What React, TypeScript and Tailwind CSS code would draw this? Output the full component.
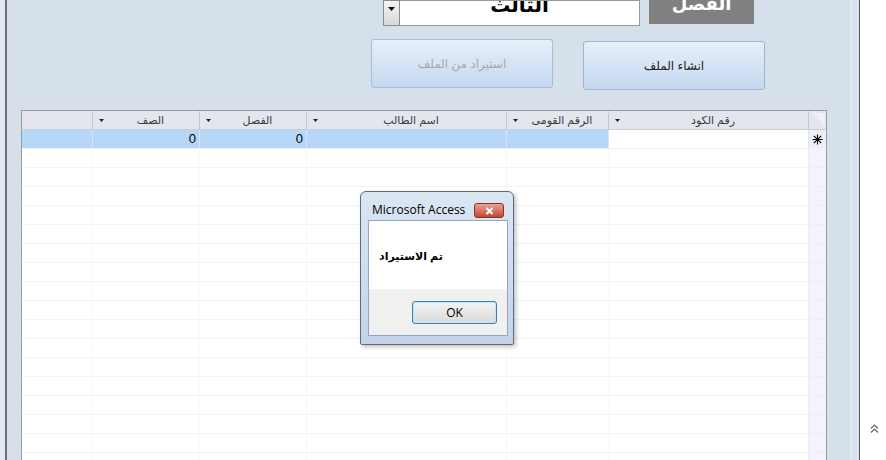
import React from "react";

const FONT = { fontFamily: "'Liberation Sans', 'DejaVu Sans', Arial, sans-serif" };

function Arrow() {
  return (
    <svg width="5" height="3" viewBox="0 0 5 3" className="shrink-0">
      <path d="M0 0 H5 L2.5 3 Z" fill="#222" />
    </svg>
  );
}

export default function App() {
  const rows = Array.from({ length: 17 });
  const headers = ["الصف", "الفصل", "اسم الطالب", "الرقم القومى", "رقم الكود"];
  return (
    <div className="relative w-[886px] h-[460px] overflow-hidden flex bg-white" style={FONT}>
      {/* left frame */}
      <div className="w-[5px] h-full bg-[#dfe9f5]" />
      <div className="w-[2px] h-full bg-[#6e6e6e]" />

      {/* main form */}
      <div className="w-[843px] h-full bg-[#d6e0eb] flex flex-col">
        {/* top row */}
        <div className="flex items-start ml-[376px] h-[26px]">
          <div className="w-[17px] h-[26px] border border-[#8c8c8c] bg-gradient-to-b from-[#f4f4f4] to-[#d8d8d8] flex justify-center pt-[6px]">
            <svg width="7" height="4" viewBox="0 0 7 4">
              <path d="M0 0 H7 L3.5 4 Z" fill="#111" />
            </svg>
          </div>
          <div className="w-[240px] h-[26px] border border-l-0 border-[#9a9a9a] bg-white overflow-hidden flex justify-center">
            <span className="text-[20px] font-bold text-black leading-none -mt-[6px]">الثالث</span>
          </div>
          <div className="ml-[9px] w-[105px] h-[24px] bg-[#808080] overflow-hidden flex justify-center">
            <span className="text-[18px] font-bold text-white leading-none -mt-[5px]">الفصل</span>
          </div>
        </div>

        {/* buttons row */}
        <div className="flex items-start ml-[364px] mt-[13px]">
          <div className="w-[182px] h-[49px] rounded-[3px] border border-[#a9bdd6] bg-gradient-to-b from-[#e7effa] to-[#c5d8f1] flex items-center justify-center text-[12px] text-[#a8a8a8]">
            استيراد من الملف
          </div>
          <div className="ml-[30px] mt-[2px] w-[182px] h-[49px] rounded-[3px] border border-[#9fb4cf] bg-gradient-to-b from-[#e7effa] to-[#c5d8f1] flex items-center justify-center text-[12px] text-[#222]">
            انشاء الملف
          </div>
        </div>

        {/* datasheet */}
        <div className="ml-[14px] mt-[20px] w-[806px] flex-1 border-l border-t border-r border-[#9c9c9c] bg-white">
          {/* header */}
          <div className="grid grid-cols-[70px_107px_107px_200px_102px_200px_18px] h-[19px] bg-[#e3e7ed] border-b border-[#c9ced6]">
            <div />
            {headers.map((h) => (
              <div key={h} className="flex items-center border-l border-[#c4c9d1] pl-[6px] pr-[2px]">
                <Arrow />
                <span className="flex-1 text-center text-[11px] text-[#3a3a3a] leading-none">{h}</span>
              </div>
            ))}
            <div className="border-l border-[#c4c9d1] relative overflow-hidden">
              <svg width="18" height="18" viewBox="0 0 18 18" className="absolute inset-0">
                <path d="M3 2 L16 15 L16 2 Z" fill="#eef1f6" />
              </svg>
            </div>
          </div>

          {/* new record row */}
          <div className="grid grid-cols-[70px_107px_107px_200px_102px_200px_18px] h-[19px] border-b border-[#f0f0f0]">
            <div className="bg-[#b7d7f8]" />
            <div className="bg-[#b7d7f8] border-l border-[#d4e6fa] text-right pr-[3px] text-[13px] leading-[18px] text-black">0</div>
            <div className="bg-[#b7d7f8] border-l border-[#d4e6fa] text-right pr-[3px] text-[13px] leading-[18px] text-black">0</div>
            <div className="bg-[#b7d7f8] border-l border-[#d4e6fa]" />
            <div className="bg-[#b7d7f8] border-l border-[#d4e6fa]" />
            <div className="bg-white border-l border-[#d4e6fa]" />
            <div className="bg-[#eceff5] border-l border-[#dfe3ea] flex items-center justify-center">
              <svg width="11" height="11" viewBox="0 0 11 11">
                <path d="M5.5 0.5 V10.5 M0.5 5.5 H10.5 M1.8 1.8 L9.2 9.2 M9.2 1.8 L1.8 9.2" stroke="#000" strokeWidth="1.1" />
              </svg>
            </div>
          </div>

          {rows.map((_, i) => (
            <div key={i} className="grid grid-cols-[70px_107px_107px_200px_102px_200px_18px] h-[19px] border-b border-[#f3f3f3]">
              <div />
              <div className="border-l border-[#f8f8f8]" />
              <div className="border-l border-[#f8f8f8]" />
              <div className="border-l border-[#f8f8f8]" />
              <div className="border-l border-[#f8f8f8]" />
              <div className="border-l border-[#f9f9f3]" />
              <div className="bg-[#f2f4fb] border-l border-[#ebeef4] border-b border-[#dfe3ec] -mb-px" />
            </div>
          ))}
        </div>
      </div>

      {/* right frame */}
      <div className="w-[2px] h-full bg-[#e2eaf4]" />
      <div className="w-[7px] h-full bg-[#d9e4f0]" />
      <div className="w-[1px] h-full bg-[#555]" />
      <div className="flex-1 h-full bg-white flex flex-col justify-end items-center pb-[26px] pl-[2px]">
        <svg width="9" height="10" viewBox="0 0 9 10">
          <path d="M1 4.5 L4.5 1 L8 4.5 M1 8.5 L4.5 5 L8 8.5" fill="none" stroke="#666" strokeWidth="1.2" />
        </svg>
      </div>

      {/* message box */}
      <div className="absolute left-[360px] top-[191px] w-[154px] h-[154px] rounded-t-[6px] rounded-b-[2px] border border-[#5d6b7e] bg-gradient-to-b from-[#dbe6f3] to-[#c3d4ea] shadow-[2px_2px_4px_rgba(0,0,0,0.25)] flex flex-col">
        <div className="h-[28px] flex items-start pt-[12px] pl-[11px] pr-[9px]">
          <span className="text-[12px] leading-none text-black flex-1" style={{ fontFamily: "'Open Sans', 'Noto Sans', sans-serif" }}>Microsoft Access</span>
          <div className="-mt-[1px] w-[30px] h-[15px] rounded-[3px] border border-[#8a3426] bg-gradient-to-b from-[#e6a395] to-[#c44532] flex items-center justify-center">
            <svg width="9" height="8" viewBox="0 0 9 8">
              <path d="M1.5 1 L7.5 7 M7.5 1 L1.5 7" stroke="white" strokeWidth="2" />
            </svg>
          </div>
        </div>
        <div className="ml-[7px] mr-[5px] flex-1 mb-[8px] border border-[#94a7c0] bg-white flex flex-col">
          <div className="h-[68px] flex items-center pl-[10px] pt-[2px]">
            <span className="text-[11px] font-bold text-black">تم الاستيراد</span>
          </div>
          <div className="flex-1 bg-[#f0f0f0] flex items-start pt-[12px] pl-[43px]">
            <div className="w-[85px] h-[23px] rounded-[3px] border border-[#3c7fb1] bg-gradient-to-b from-[#f3f3f3] to-[#dadada] shadow-[inset_0_0_0_1px_#c6e3f7] flex items-center justify-center text-[12px] text-black" style={{ fontFamily: "'Open Sans', 'Noto Sans', sans-serif" }}>
              OK
            </div>
          </div>
        </div>
      </div>
    </div>
  );
}
